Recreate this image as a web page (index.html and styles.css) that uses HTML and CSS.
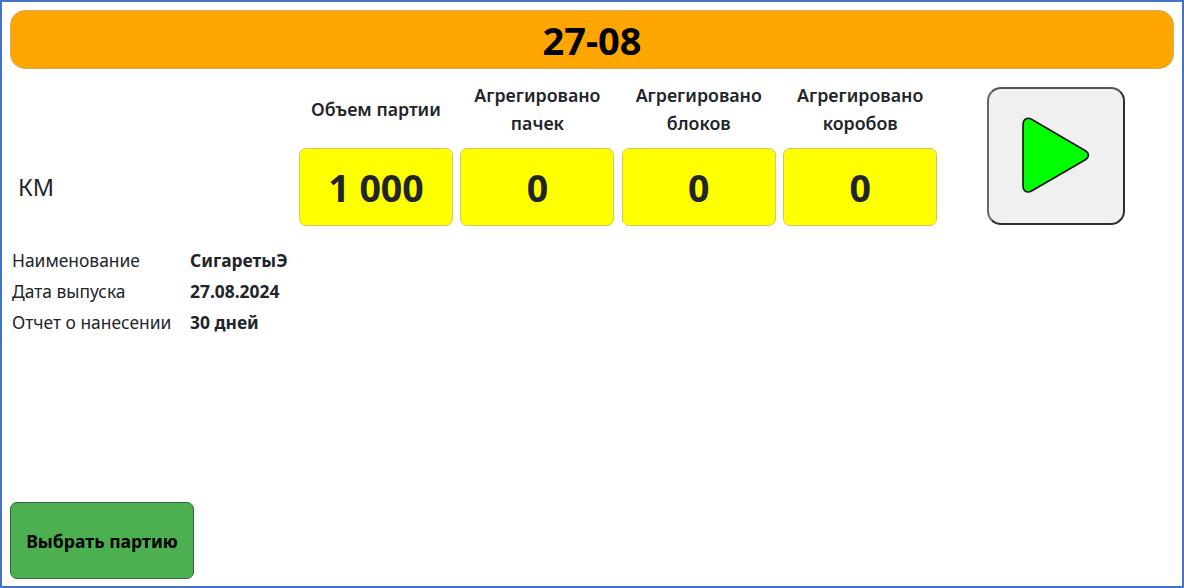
FILE: index.html
```html
<!DOCTYPE html>
<html lang="ru">
<head>
<meta charset="utf-8">
<title>27-08</title>
<link rel="stylesheet" href="styles.css">
</head>
<body>
<main class="frame">
  <header class="title">27-08</header>
  <section class="top">
    <div class="km">КМ</div>
    <div class="stat"><div class="stat-label">Объем партии</div><div class="tile">1 000</div></div>
    <div class="stat"><div class="stat-label">Агрегировано<br>пачек</div><div class="tile">0</div></div>
    <div class="stat"><div class="stat-label">Агрегировано<br>блоков</div><div class="tile">0</div></div>
    <div class="stat"><div class="stat-label">Агрегировано<br>коробов</div><div class="tile">0</div></div>
    <button class="play" type="button" aria-label="Старт">
      <svg class="play-icon" width="70" height="80" viewBox="0 0 70 80"><path d="M2 8.5C2 3.5 6 0.8 10.5 3.2L64 34.5C68.5 37 68.5 41.5 64 44L10.5 75C6 77.5 2 75 2 70Z" fill="#00ff00" stroke="#111" stroke-width="1.6" stroke-linejoin="round"/></svg>
    </button>
  </section>
  <section class="details">
    <div class="dl">Наименование</div><div class="dv">СигаретыЭ</div>
    <div class="dl">Дата выпуска</div><div class="dv">27.08.2024</div>
    <div class="dl">Отчет о нанесении</div><div class="dv">30 дней</div>
  </section>
  <button class="choose" type="button">Выбрать партию</button>
</main>
</body>
</html>
```
FILE: styles.css
```css
* { box-sizing: border-box; }
html, body { margin: 0; padding: 0; background: #fff; }
body { font-family: "Noto Sans", "Open Sans", sans-serif; color: #212529; }
.frame {
  width: 1184px; height: 588px;
  border: 2px solid #4472c4;
  padding: 8px 8px 7px;
  display: flex; flex-direction: column;
  align-items: flex-start;
}
.title {
  width: 1164px; height: 59px;
  background: #ffa500;
  border: 1px solid #d4ab66;
  border-radius: 15px;
  color: #000;
  font-size: 38px; font-weight: 700;
  display: flex; align-items: center; justify-content: center;
}
.top { display: flex; align-items: flex-end; margin-top: 18px; height: 139px; }
.km { width: 289px; height: 78px; padding-left: 8px; font-size: 23.5px; display: flex; align-items: center; }
.stat { width: 154px; margin-right: 7.4px; display: flex; flex-direction: column; }
.stat-label {
  height: 47px; margin-bottom: 16px;
  display: flex; align-items: center; justify-content: center;
  text-align: center;
  font-size: 17.8px; line-height: 28px; font-weight: 600;
}
.tile {
  height: 78px;
  padding-top: 1px;
  background: #ffff00;
  border: 1px solid #cfc95c;
  border-radius: 7px;
  font-size: 37.5px; font-weight: 700;
  display: flex; align-items: center; justify-content: center;
}
.play {
  width: 138px; height: 138px;
  margin-left: 42px;
  align-self: flex-start;
  background: #f0f0f0;
  border: 2px solid #2e2e2e;
  border-left-color: #666;
  border-top-color: #555;
  border-radius: 14px;
  padding: 0;
  display: flex; align-items: center; justify-content: center;
}
.play-icon { display: block; }
.details {
  margin-top: 18px; padding-left: 2px;
  display: grid; grid-template-columns: 178px auto;
  grid-auto-rows: 31px; align-items: center;
  font-size: 17.4px;
}
.dv { font-weight: 700; }
.choose {
  margin-top: auto;
  width: 184px; height: 77px;
  background: #4caf50;
  border: 1px solid #33663a;
  border-radius: 7px;
  color: #000;
  font-family: inherit; font-size: 17.6px; font-weight: 700;
}
```
